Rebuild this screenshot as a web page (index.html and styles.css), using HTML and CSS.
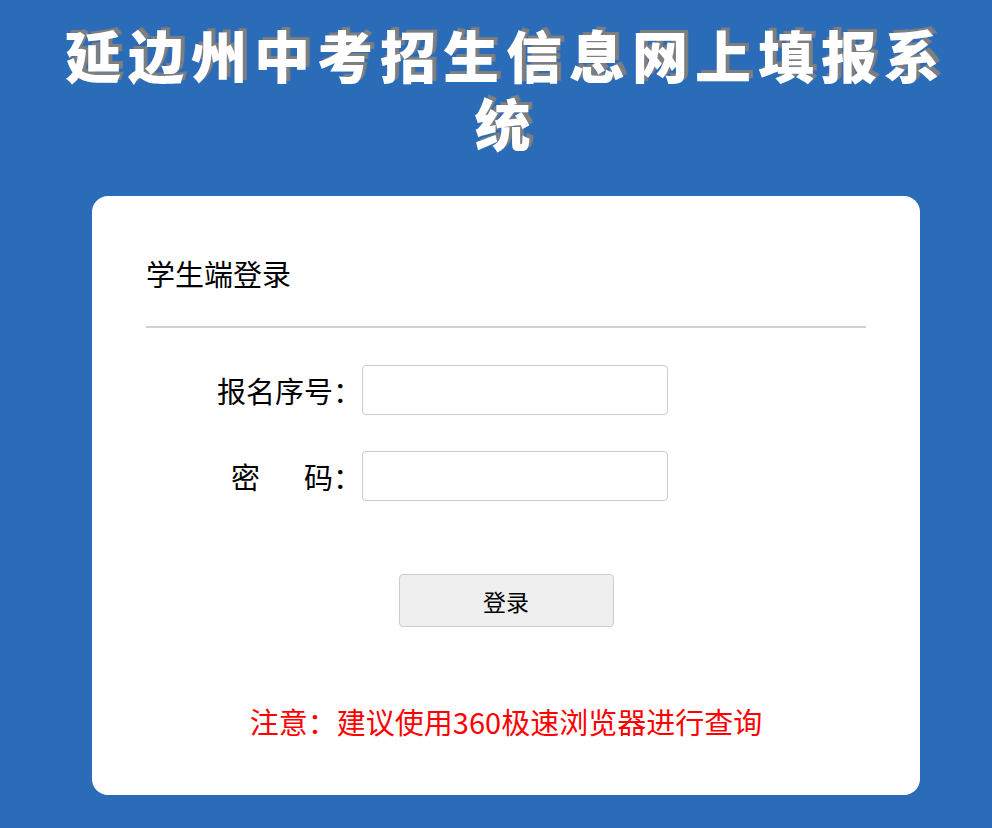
FILE: index.html
```html
<!DOCTYPE html>
<html>
<head>
  <meta charset="utf-8">
  <title>延边州中考招生信息网上填报系统</title>
  <meta name="viewport" content="width=device-width, initial-scale=1">
  <link rel="stylesheet" href="styles.css">
</head>
<body>
  <h1 class="title">延边州中考招生信息网上填报系统</h1>

  <div class="card">
    <div class="card-head">学生端登录</div>

    <form id="login-form" class="login-form">
      <div class="row">
        <label for="bmxh">报名序号：</label>
        <input type="text" id="bmxh" name="bmxh">
      </div>
      <div class="row">
        <label for="mm"><span class="sp">密</span>码：</label>
        <input type="password" id="mm" name="mm">
      </div>
      <div class="btn-row">
        <button type="submit" class="btn">登录</button>
      </div>
    </form>

    <p class="notice">注意：建议使用360极速浏览器进行查询</p>
  </div>
</body>
</html>
```

FILE: styles.css
```css
body {
  margin: 0;
  padding: 0 0 0 20px;
  background-color: #2b6cb9;
  font-family: "Noto Sans CJK SC", "Noto Sans", sans-serif;
  color: #000;
}
.title {
  margin: 20px 0 0;
  padding: 0 30px;
  text-align: center;
  color: #fff;
  font-size: 56px;
  line-height: 68px;
  font-weight: 900;
  letter-spacing: 7px;
  text-shadow: 4px -3px 1px #7f7f7f;
}
.card {
  box-sizing: border-box;
  width: 828px;
  margin: 40px auto 0;
  padding: 57px 54px 54px;
  background-color: #fff;
  border-radius: 16px;
}
.card-head {
  font-size: 29px;
  line-height: 40px;
  padding-bottom: 33px;
  border-bottom: 2px solid #d0d0d0;
}
.login-form {
  margin-top: 37px;
}
.row {
  display: grid;
  grid-template-columns: 216px 306px;
  align-items: center;
  margin-bottom: 36px;
}
.row label {
  text-align: right;
  font-size: 29px;
  line-height: 40px;
}
.row .sp {
  margin-right: 44px;
}
.row input {
  box-sizing: border-box;
  height: 50px;
  border: 1px solid #ccc;
  border-radius: 4px;
  padding: 0 10px;
  font-size: 20px;
}
.btn-row {
  text-align: center;
  padding-top: 37px;
}
.btn {
  width: 215px;
  height: 53px;
  background-color: #efefef;
  border: 1px solid #ccc;
  border-radius: 4px;
  font-family: inherit;
  font-size: 23px;
  color: #000;
  cursor: pointer;
}
.notice {
  margin: 74px 0 0;
  text-align: center;
  color: #f00;
  font-size: 29px;
  line-height: 40px;
}
```
